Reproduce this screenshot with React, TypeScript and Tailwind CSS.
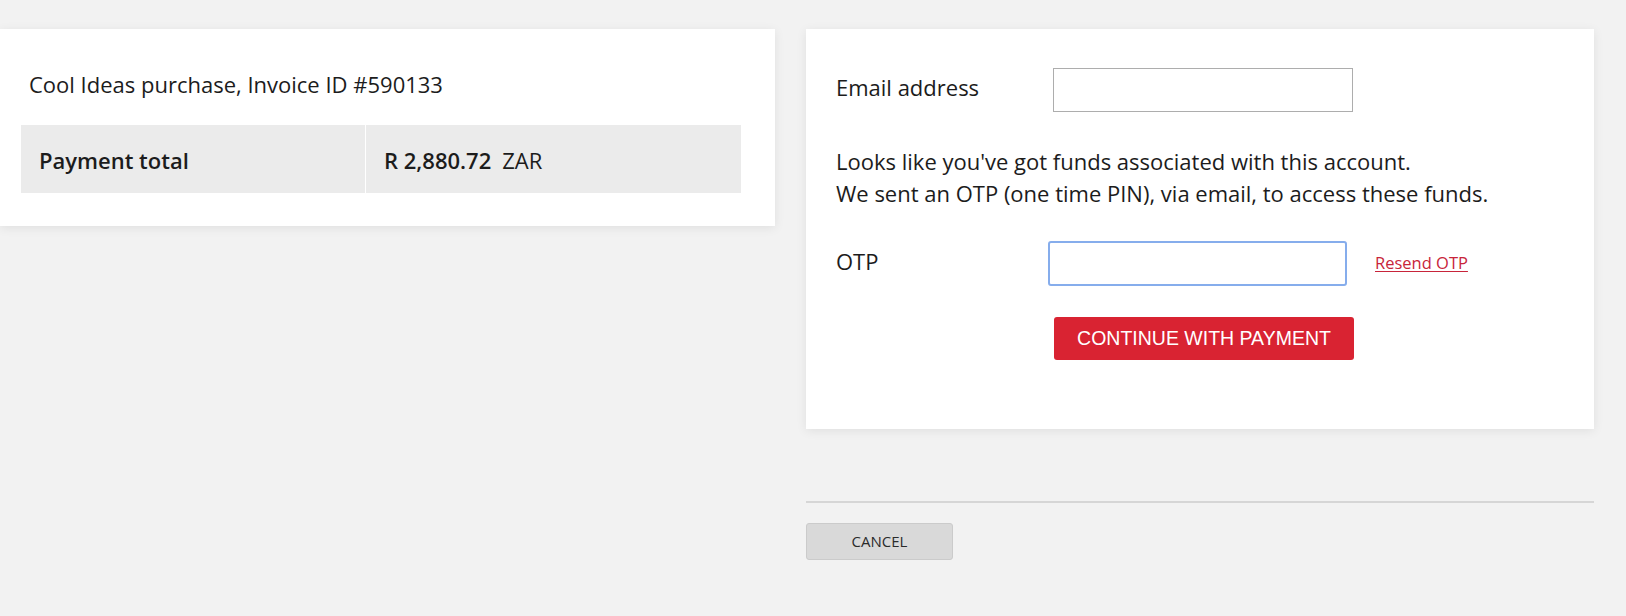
export default function App() {
  return (
    <div className="min-h-[616px] bg-[#f2f2f2] font-['Open_Sans',sans-serif] text-[#1c1c1c]">
      <div className="flex items-start gap-[31px] pt-[29px] pr-[32px]">
        {/* Invoice summary */}
        <section className="w-[775px] shrink-0 bg-white pl-[21px] pr-[34px] pt-[39px] pb-[33px] shadow-[0_2px_10px_rgba(0,0,0,0.08)]">
          <p className="pl-[8px] text-[22px] leading-[32px]">Cool Ideas purchase, Invoice ID #590133</p>
          <div className="mt-[25px] grid h-[68px] grid-cols-[344px_1fr] gap-px text-[22px]">
            <div className="flex items-center bg-[#ebebeb] pl-[18px] pt-[2px] font-semibold">Payment total</div>
            <div className="flex items-center bg-[#ebebeb] pl-[18px] pt-[2px]">
              <span className="font-semibold">R 2,880.72</span>
              <span className="ml-[11px]">ZAR</span>
            </div>
          </div>
        </section>

        {/* Payment form */}
        <div className="flex flex-1 flex-col">
          <section className="bg-white pl-[30px] pt-[39px] pb-[69px] shadow-[0_2px_10px_rgba(0,0,0,0.08)]">
            <div className="flex items-center">
              <label className="-mt-[6px] w-[217px] text-[22px] leading-[32px]">Email address</label>
              <input
                type="email"
                className="h-[44px] w-[300px] border border-[#adadad] bg-white px-2 text-[18px] outline-none"
              />
            </div>

            <p className="mt-[33px] text-[22px] leading-[32px]">
              Looks like you've got funds associated with this account.
              <br />
              We sent an OTP (one time PIN), via email, to access these funds.
            </p>

            <div className="mt-[32px] flex items-center">
              <label className="-mt-[5px] w-[212px] text-[22px] leading-[32px]">OTP</label>
              <input
                type="text"
                className="h-[45px] w-[299px] rounded-[3px] border-2 border-[#86adec] bg-white px-2 text-[18px] outline-none"
              />
              <a href="#" className="ml-[28px] text-[16.5px] text-[#c8243a] underline underline-offset-2">
                Resend OTP
              </a>
            </div>

            <button className="mt-[31px] ml-[218px] h-[43px] w-[300px] rounded-[3px] bg-[#d92332] font-['Liberation_Sans',Arial,sans-serif] text-[19.5px] text-white">
              CONTINUE WITH PAYMENT
            </button>
          </section>

          <hr className="mt-[72px] border-0 border-t-2 border-[#d6d6d6]" />

          <div className="mt-[20px]">
            <button className="h-[37px] w-[147px] rounded-[3px] border border-[#cbcbcb] bg-[#d9d9d9] text-[15px] text-[#2b2b2b]">
              CANCEL
            </button>
          </div>
        </div>
      </div>
    </div>
  );
}
